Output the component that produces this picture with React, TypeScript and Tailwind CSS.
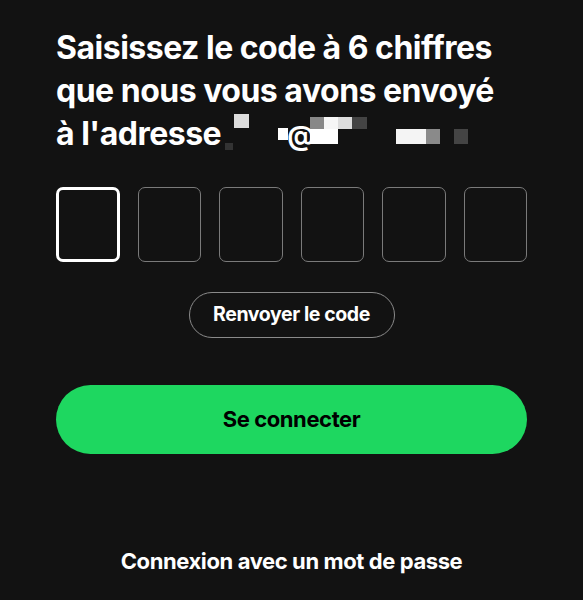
import React from 'react';

const font = { fontFamily: 'Inter, "Noto Sans", sans-serif' };

// pixelated redaction over the email address (drawn blocks)
const BlocksLeft: React.FC = () => (
  <svg width="64" height="40" viewBox="0 0 64 40" className="shrink-0">
    <rect x="9" y="0" width="15" height="14" fill="#dcdcdc" />
    <rect x="0" y="29" width="8" height="7" fill="#333333" />
    <rect x="53" y="14" width="10" height="12" fill="#ffffff" />
  </svg>
);

const BlocksRight: React.FC = () => (
  <svg width="160" height="40" viewBox="0 0 160 40" className="shrink-0">
    <rect x="0" y="2" width="14" height="12" fill="#888888" />
    <rect x="14" y="2" width="14" height="12" fill="#f6f6f6" />
    <rect x="28" y="2" width="14" height="12" fill="#dddddd" />
    <rect x="42" y="2" width="15" height="12" fill="#444444" />
    <rect x="0" y="14" width="28" height="15" fill="#ffffff" />
    <rect x="86" y="14" width="30" height="15" fill="#f4f4f4" />
    <rect x="116" y="14" width="14" height="15" fill="#8a8a8a" />
    <rect x="144" y="14" width="14" height="15" fill="#444444" />
  </svg>
);

const App: React.FC = () => {
  return (
    <div className="min-h-[600px] w-[583px] bg-[#121212] px-[56px] pt-[26px] text-white" style={font}>
      <h1 className="text-[32px] font-bold leading-[43px] tracking-[-0.5px]">
        <span className="block">Saisissez le code à 6 chiffres</span>
        <span className="block">que nous vous avons envoyé</span>
        <span className="flex items-center">
          <span>à l'adresse</span>
          <span className="ml-[4px] flex items-center">
            <BlocksLeft />
            <span className="-ml-[2px] mt-[3px] text-[27px] leading-none">@</span>
            <span className="-ml-[4px] mt-[2px]">
              <BlocksRight />
            </span>
          </span>
        </span>
      </h1>

      <div className="mt-[32px] grid grid-cols-6 gap-[18px]">
        {[...Array(6)].map((_, i) => (
          <div
            key={i}
            className={
              i === 0
                ? 'h-[75px] rounded-[7px] border-[3px] border-white'
                : 'h-[75px] rounded-[7px] border-[1.5px] border-[#7a7a7a]'
            }
          />
        ))}
      </div>

      <div className="mt-[30px] flex justify-center">
        <button className="h-[46px] w-[206px] rounded-full border border-[#8a8a8a] text-[19.5px] font-bold tracking-[-0.4px] text-white">
          Renvoyer le code
        </button>
      </div>

      <button className="mt-[47px] h-[69px] w-full rounded-full bg-[#1ed760] text-[22px] font-bold tracking-[-0.4px] text-black">
        Se connecter
      </button>

      <div className="mt-[91px] text-center text-[22px] font-bold tracking-[-0.4px]">
        Connexion avec un mot de passe
      </div>
    </div>
  );
};

export default App;
